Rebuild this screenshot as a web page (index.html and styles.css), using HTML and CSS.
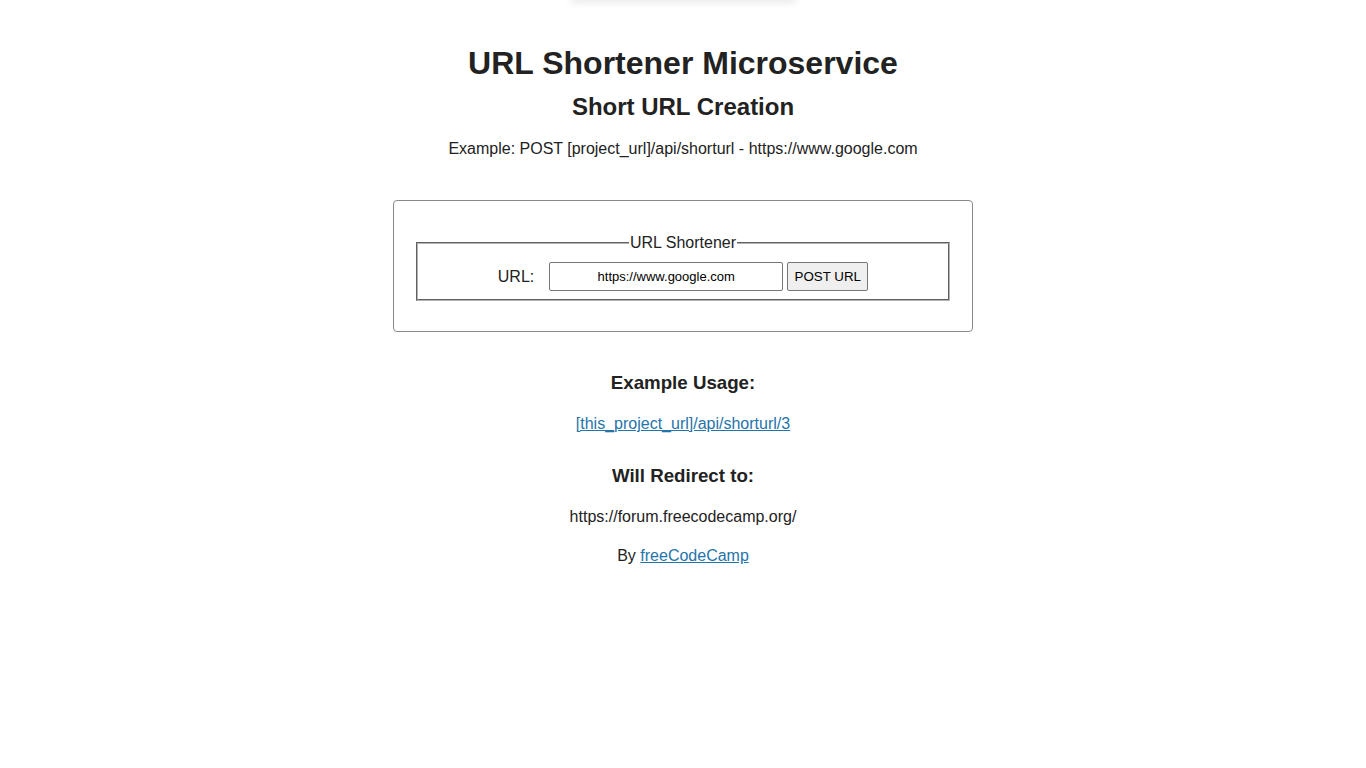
FILE: index.html
```html
<!DOCTYPE html>
<html lang="en">
<head>
<meta charset="utf-8">
<title>URL Shortener Microservice</title>
<link rel="stylesheet" href="styles.css">
</head>
<body>
<div class="topbar"></div>
<main class="container">
  <h1 class="title">URL Shortener Microservice</h1>
  <h2 class="subtitle">Short URL Creation</h2>
  <p class="example">Example: POST [project_url]/api/shorturl - https://www.google.com</p>
  <div class="card">
    <form class="form">
      <fieldset class="fieldset">
        <legend class="legend">URL Shortener</legend>
        <div class="row">
          <label class="label" for="url_input">URL:</label>
          <input class="input" id="url_input" type="text" value="https://www.google.com">
          <button class="button" type="button">POST URL</button>
        </div>
      </fieldset>
    </form>
  </div>
  <h3 class="heading">Example Usage:</h3>
  <p class="line"><a class="link" href="#">[this_project_url]/api/shorturl/3</a></p>
  <h3 class="heading">Will Redirect to:</h3>
  <p class="line">https://forum.freecodecamp.org/</p>
  <p class="line by">By <a class="link" href="#">freeCodeCamp</a></p>
</main>
</body>
</html>
```
FILE: styles.css
```css
html, body {
  margin: 0;
  padding: 0;
  background: #ffffff;
}
body {
  font-family: "Liberation Sans", Arial, sans-serif;
  font-size: 16px;
  color: #222222;
  text-align: center;
}
.topbar {
  width: 225px;
  height: 10px;
  margin: -10px auto 0;
  background: #fff;
  box-shadow: 0 2px 8px rgba(0, 0, 0, 0.1);
}
.container {
  padding-top: 45px;
}
.title {
  font-size: 32px;
  margin: 0;
  line-height: 37px;
}
.subtitle {
  font-size: 24px;
  margin: 11px 0 0;
  line-height: 28px;
}
.example {
  margin: 19px 0 0;
  line-height: 18px;
}
.card {
  width: 580px;
  margin: 42px auto 0;
  border: 1px solid #8a8a8a;
  border-radius: 4px;
  padding: 33px 22px 30px;
  box-sizing: border-box;
}
.form {
  margin: 0;
}
.fieldset {
  margin: 0;
  border: 2px groove #b4b4b4;
  padding: 10px 10px 8px;
}
.legend {
  padding: 0 1px;
  font-size: 16px;
  line-height: 18px;
}
.row {
  display: flex;
  justify-content: center;
  align-items: center;
}
.label {
  margin-right: 15px;
  font-size: 16px;
}
.input {
  width: 234px;
  height: 29px;
  box-sizing: border-box;
  border: 1px solid #767676;
  border-radius: 2px;
  font-family: "Liberation Sans", Arial, sans-serif;
  font-size: 13px;
  text-align: center;
  color: #000;
  padding: 1px 2px;
  margin: 0;
}
.button {
  width: 81px;
  height: 29px;
  margin-left: 4px;
  box-sizing: border-box;
  border: 1px solid #767676;
  border-radius: 2px;
  background: #efefef;
  font-family: "Liberation Sans", Arial, sans-serif;
  font-size: 13.33px;
  color: #000;
  padding: 1px 4px;
}
.heading {
  font-size: 18.72px;
  margin: 40px 0 0;
  line-height: 22px;
}
.line {
  margin: 21px 0 0;
  line-height: 18px;
}
.line + .heading {
  margin-top: 32px;
}
.by {
  margin-top: 21px;
}
.link {
  color: #2574a9;
}
```
